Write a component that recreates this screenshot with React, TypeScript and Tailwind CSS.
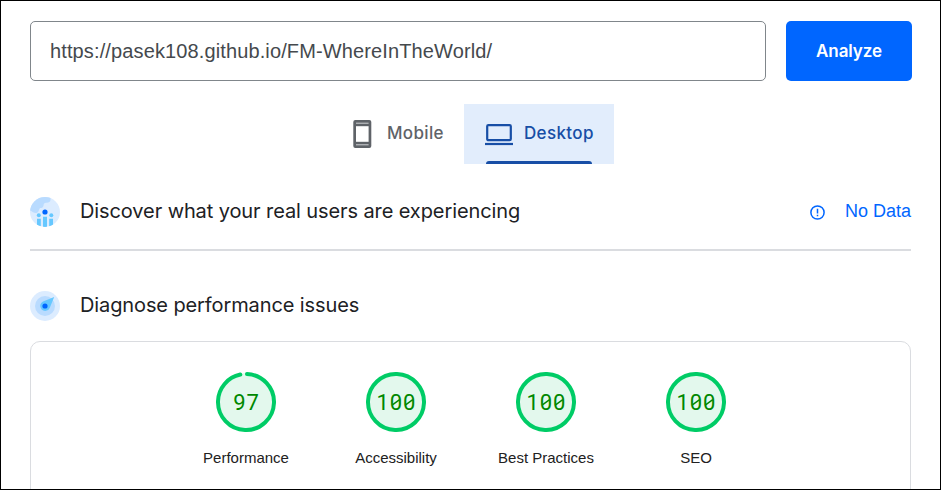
const gauges = [
  { label: 'Performance', score: 97 },
  { label: 'Accessibility', score: 100 },
  { label: 'Best Practices', score: 100 },
  { label: 'SEO', score: 100 },
];

const ARIAL = "font-['Liberation_Sans',Arial,sans-serif]";
const SANS = "font-['Inter',sans-serif]";

function Gauge({ label, score }: { label: string; score: number }) {
  const full = score === 100;
  const r = 28;
  const c = 2 * Math.PI * r;
  return (
    <div className="flex w-[150px] flex-col items-center">
      <svg width="60" height="60" viewBox="0 0 60 60">
        <circle cx="30" cy="30" r="29" fill="#e3f8ed" />
        <circle
          cx="30"
          cy="30"
          r={r}
          fill="none"
          stroke="#00cc66"
          strokeWidth="4"
          strokeLinecap="round"
          strokeDasharray={full ? undefined : `${c - 7} ${c}`}
          transform="rotate(-88 30 30)"
        />
        <text
          x="30.4"
          y="37.8"
          textAnchor="middle"
          fill="#008800"
          className="font-['Roboto',sans-serif] text-[22px] tracking-[0.85px]"
        >
          {score}
        </text>
        {full && (
          <g stroke="#008800" strokeWidth="1.5">
            <path d="M26.4 32.8 33.6 27.6" />
            <path d="M39.6 32.8 46.8 27.6" />
          </g>
        )}
      </svg>
      <div className={`${ARIAL} mt-4 pl-px text-[15px] leading-5 text-[#212121]`}>{label}</div>
    </div>
  );
}

function UsersIcon() {
  return (
    <svg width="30" height="30" viewBox="0 0 30 30">
      <defs>
        <clipPath id="disc"><circle cx="15" cy="15" r="15" /></clipPath>
      </defs>
      <g clipPath="url(#disc)">
        <rect width="30" height="30" fill="#dcecff" />
        <path d="M0 0h20.5v3c-.3 2-2 3-4.5 2.7-1.5.3-2.5 1-2.5 3-.5 2.3-2 2-3.5 2.3C9 12 9 14.5 7.5 15.5 5 17 3 15 0 13.5z" fill="#b9dbff" />
        <g fill="#66c8ff">
          <circle cx="8.8" cy="18.3" r="2" />
          <circle cx="21.3" cy="18.3" r="2" />
          <path d="M7 21.7h3.8V30H7zM13 19.7h4V30h-4zM19.2 21.7H23V30h-3.8z" />
        </g>
        <circle cx="15" cy="15" r="2.6" fill="#0066ff" />
      </g>
    </svg>
  );
}

function CompassIcon() {
  return (
    <svg width="30" height="30" viewBox="0 0 30 30">
      <circle cx="15" cy="15" r="15" fill="#dcecff" />
      <circle cx="15" cy="15" r="10" fill="#b9dbff" />
      <path d="M24.2 6 19.7 17A5 5 0 1 1 13 10.4z" fill="#66c8ff" />
      <circle cx="15" cy="15" r="2.6" fill="#0066ff" />
    </svg>
  );
}

export default function App() {
  return (
    <div className="flex h-[490px] w-[941px] flex-col overflow-hidden border border-black bg-white pl-[29px] pt-5">
      <div className="flex shrink-0 gap-5">
        <div className={`${ARIAL} flex h-[60px] w-[736px] items-center rounded-[5px] border border-[#80868b] px-[19px] text-[20px] text-[#45494d]`}>
          <span className="tracking-[0.125px]">https://pasek108.github.io/FM-WhereInTheWorld/</span>
        </div>
        <button className={`${SANS} h-[60px] w-[126px] rounded-[5px] bg-[#0066ff] pt-[2px] text-[17px] font-semibold tracking-[-0.1px] text-white`}>
          Analyze
        </button>
      </div>

      <div className={`${SANS} mt-[23px] flex h-[60px] shrink-0 pl-[299px] text-[17px] font-medium`}>
        <div className="flex w-[135px] items-center pl-6 text-[#5f6368]">
          <svg className="mr-[15px] shrink-0" width="19" height="30" viewBox="0 0 19 30">
            <rect x=".3" y="1" width="18" height="28" rx="2" fill="#5f6368" />
            <path d="M3 4.2h12.6M3 25.8h12.6" stroke="#d0d2d4" strokeWidth="1" />
            <rect x="3" y="7.2" width="12.6" height="15.6" fill="#fff" />
          </svg>
          <span className="tracking-[0.35px]">Mobile</span>
        </div>
        <div className="flex w-[150px] flex-col bg-[#e2edfc] text-[#174ea6]">
          <div className="flex h-[57px] items-center pl-[21px] pt-[3px]">
            <svg className="mr-[11px] shrink-0" width="28" height="24" viewBox="0 0 28 24">
              <rect x="2.2" y="3.1" width="23.6" height="15.1" rx="1.2" fill="none" stroke="#174ea6" strokeWidth="2.2" />
              <path d="M0 22h28" stroke="#174ea6" strokeWidth="2.2" />
            </svg>
            <span className="tracking-[0.35px]">Desktop</span>
          </div>
          <div className="mx-[22px] h-[3px] rounded-t-[3px] bg-[#174ea6]" />
        </div>
      </div>

      <div className="mt-[33px] flex h-[30px] w-[881px] shrink-0 items-center">
        <UsersIcon />
        <h2 className={`${SANS} ml-5 pb-[2px] text-[20px] tracking-[-0.1px] text-[#202124]`}>Discover what your real users are experiencing</h2>
        <div className={`${ARIAL} ml-auto flex items-center gap-5 text-[18px] text-[#0066ff]`}>
          <svg width="15" height="15" viewBox="0 0 15 15" fill="none" stroke="#0066ff">
            <circle cx="7.5" cy="7.5" r="6.6" strokeWidth="1.5" />
            <path d="M7.5 3.7v4.7M7.5 9.8v1.5" strokeWidth="1.5" />
          </svg>
          <span className="pb-[2px]">No Data</span>
        </div>
      </div>
      <div className="mt-[22px] h-[2px] w-[881px] shrink-0 bg-[#dadce0]" />

      <div className="mt-10 flex h-[30px] shrink-0 items-center">
        <CompassIcon />
        <h2 className={`${SANS} ml-5 pb-[2px] text-[20px] tracking-[-0.11px] text-[#202124]`}>Diagnose performance issues</h2>
      </div>

      <div className="mt-5 flex h-[170px] w-[881px] shrink-0 justify-center rounded-[10px] border border-[#dadce0] pt-[30px]">
        {gauges.map((g) => (
          <Gauge key={g.label} {...g} />
        ))}
      </div>
    </div>
  );
}
